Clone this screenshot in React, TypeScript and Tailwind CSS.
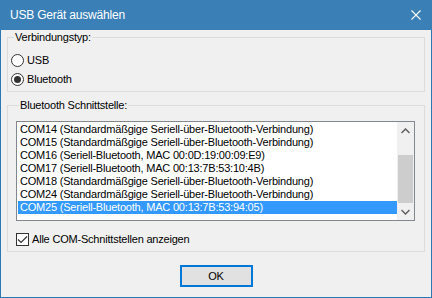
import React from 'react'

const ports = [
  'COM14 (Standardmäßgige Seriell-über-Bluetooth-Verbindung)',
  'COM15 (Standardmäßgige Seriell-über-Bluetooth-Verbindung)',
  'COM16 (Seriell-Bluetooth, MAC 00:0D:19:00:09:E9)',
  'COM17 (Seriell-Bluetooth, MAC 00:13:7B:53:10:4B)',
  'COM18 (Standardmäßgige Seriell-über-Bluetooth-Verbindung)',
  'COM24 (Standardmäßgige Seriell-über-Bluetooth-Verbindung)',
  'COM25 (Seriell-Bluetooth, MAC 00:13:7B:53:94:05)',
]

const Radio = ({ label, checked }: { label: string; checked?: boolean }) => (
  <div className="flex items-center h-[19px]">
    <span className="w-[13px] h-[13px] rounded-full border border-[#333] bg-white flex items-center justify-center">
      {checked && <span className="w-[7px] h-[7px] rounded-full bg-[#333]" />}
    </span>
    <span className="ml-[3px]">{label}</span>
  </div>
)

export default function App() {
  return (
    <div
      className="w-[432px] h-[298px] flex flex-col bg-[#f0f0f0] border-x border-b border-[#2b79b4] text-[11px] tracking-[-0.2px] text-black"
      style={{ fontFamily: '"Liberation Sans", Arial, sans-serif' }}
    >
      {/* title bar */}
      <div className="h-[30px] shrink-0 -mx-px bg-[#3a80b6] flex items-center justify-between pl-[10px] pr-[10px] text-white">
        <span className="text-[12px] tracking-[-0.2px]">USB Gerät auswählen</span>
        <svg width="10" height="10" viewBox="0 0 10 10" className="mr-[1px]">
          <path d="M0.5 0.5 L9.5 9.5 M9.5 0.5 L0.5 9.5" stroke="white" strokeWidth="1.1" />
        </svg>
      </div>

      <div className="flex flex-col px-[6px]">
        <fieldset className="border border-[#dcdcdc] pl-[3px] pt-[6px] h-[62px]">
          <legend className="ml-[3px] px-[1px] leading-[15px]">Verbindungstyp:</legend>
          <Radio label="USB" />
          <Radio label="Bluetooth" checked />
        </fieldset>

        <fieldset className="mt-[6px] border border-[#dcdcdc] pl-[8px] pr-[9px] h-[154px]">
          <legend className="ml-[3px] px-[1px] leading-[15px]">Bluetooth Schnittstelle:</legend>
          <div className="mt-[8px] h-[100px] border border-[#828790] bg-white flex">
            <ul className="flex-1 pt-[1px] pl-[1px] leading-[13px]">
              {ports.map((p, i) => (
                <li
                  key={p}
                  className={`h-[13px] pl-[2px] whitespace-nowrap ${
                    i === ports.length - 1 ? 'bg-[#3399ff] text-white' : ''
                  }`}
                >
                  {p}
                </li>
              ))}
            </ul>
            <div className="w-[17px] bg-[#f0f0f0] flex flex-col">
              <div className="h-[17px] flex items-center justify-center">
                <svg width="9" height="6" viewBox="0 0 9 6">
                  <path d="M0.5 5 L4.5 1 L8.5 5" fill="none" stroke="#606060" strokeWidth="1.5" />
                </svg>
              </div>
              <div className="flex-1 flex flex-col justify-end px-[1px]">
                <div className="h-[48px] bg-[#cdcdcd]" />
              </div>
              <div className="h-[17px] flex items-center justify-center">
                <svg width="9" height="6" viewBox="0 0 9 6">
                  <path d="M0.5 1 L4.5 5 L8.5 1" fill="none" stroke="#606060" strokeWidth="1.5" />
                </svg>
              </div>
            </div>
          </div>
          <div className="flex items-center mt-[10px]">
            <span className="w-[13px] h-[13px] border border-[#333] bg-white flex items-center justify-center">
              <svg width="11" height="9" viewBox="0 0 11 9">
                <path d="M1 4.5 L4 7.5 L10 1.5" fill="none" stroke="#333" strokeWidth="1.2" />
              </svg>
            </span>
            <span className="ml-[3px]">Alle COM-Schnittstellen anzeigen</span>
          </div>
        </fieldset>

        <div className="flex justify-center mt-[13px]">
          <button className="w-[73px] h-[22px] border-2 border-[#0078d7] bg-[#e1e1e1] flex items-center justify-center">
            OK
          </button>
        </div>
      </div>
    </div>
  )
}
